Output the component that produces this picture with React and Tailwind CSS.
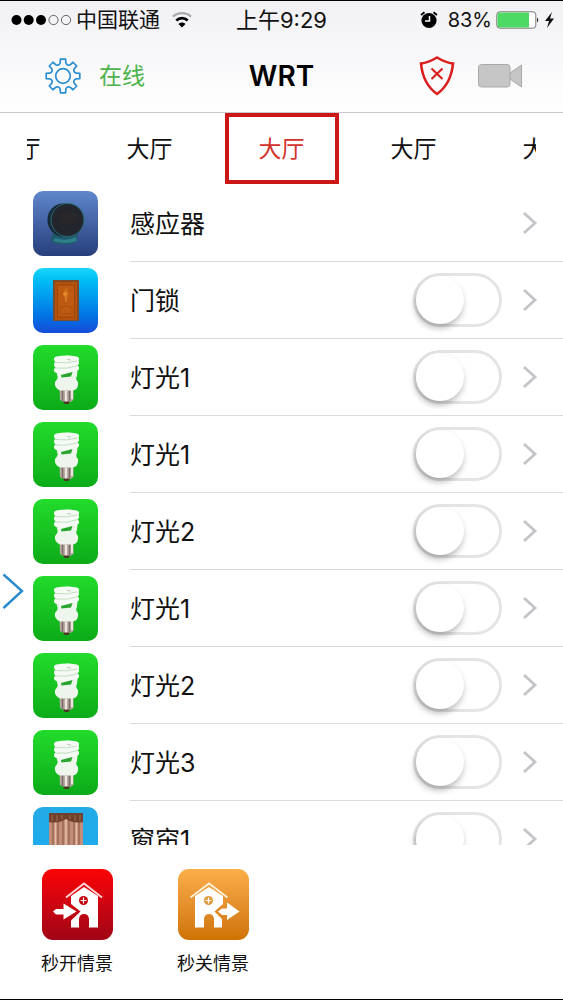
import React, { useState } from 'react';

const devices = [
    { id: 1, name: '感应器', type: 'sensor', hasSwitch: false },
    { id: 2, name: '门锁', type: 'door', hasSwitch: true },
    { id: 3, name: '灯光1', type: 'light', hasSwitch: true },
    { id: 4, name: '灯光1', type: 'light', hasSwitch: true },
    { id: 5, name: '灯光2', type: 'light', hasSwitch: true },
    { id: 6, name: '灯光1', type: 'light', hasSwitch: true },
    { id: 7, name: '灯光2', type: 'light', hasSwitch: true },
    { id: 8, name: '灯光3', type: 'light', hasSwitch: true },
    { id: 9, name: '窗帘1', type: 'curtain', hasSwitch: true },
];

const rooms = ['大厅', '大厅', '大厅', '大厅', '大厅'];

// Outline of an eight-toothed gear around 0,0
function gearPath() {
    const point = (deg, r) => {
        const rad = (deg * Math.PI) / 180;
        return `${(r * Math.sin(rad)).toFixed(2)} ${(-r * Math.cos(rad)).toFixed(2)}`;
    };
    let d = `M${point(-9, 17)}`;
    for (let a = 0; a < 360; a += 45) {
        d += `L${point(a + 9, 17)}L${point(a + 12, 13.5)}`;
        d += `Q${point(a + 22.5, 10.5)} ${point(a + 33, 13.5)}L${point(a + 36, 17)}`;
    }
    return d + 'Z';
}

function GearIcon() {
    return (
        <svg className="size-9" viewBox="-18 -18 36 36" fill="none" stroke="#2a8fd0" strokeWidth="1.7" strokeLinejoin="round" aria-hidden="true">
            <path d={gearPath()} />
            <circle r="7.3" />
        </svg>
    );
}

function ShieldIcon() {
    return (
        <svg className="h-10 w-9" viewBox="0 0 36 40" fill="none" stroke="#d9201f" aria-hidden="true">
            <path d="M18 1.5C13 4.5 7.5 7 2 7.5C3.2 20 7.5 30.5 18 38C28.5 30.5 32.8 20 34 7.5C28.5 7 23 4.5 18 1.5Z" strokeWidth="2.6" />
            <path d="M12.5 12.5L23.500 23M23.500 12.5L12.5 23" strokeWidth="2.2" />
        </svg>
    );
}

function CameraIcon() {
    return (
        <svg className="h-6 w-[45px]" viewBox="0 0 45 24" fill="#c6c6c6" stroke="#a9a9a9" aria-hidden="true">
            <path d="M32 9L43.5 1V23L32 15Z" />
            <rect x="0.5" y="0.5" width="31.5" height="22.5" rx="3" />
        </svg>
    );
}

function StatusBar() {
    return (
        <div className="grid h-[38px] grid-cols-[1fr_auto_1fr] items-center text-[21px]">
            <div className="flex items-center pl-[11px]">
                <svg className="h-3 w-[61px]" viewBox="0 0 61 12" aria-hidden="true">
                    <circle cx="5.5" cy="6" r="5" />
                    <circle cx="17.7" cy="6" r="5" />
                    <circle cx="30" cy="6" r="5" />
                    <circle cx="42.5" cy="6" r="4.6" fill="none" stroke="#555" strokeWidth="0.9" />
                    <circle cx="55" cy="6" r="4.6" fill="none" stroke="#555" strokeWidth="0.9" />
                </svg>
                <span className="ml-1">中国联通</span>
                <svg className="ml-3 h-4 w-5" viewBox="0 0 20 16" fill="none" aria-hidden="true">
                    <path d="M1 4.6C6 0 14 0 19 4.6" stroke="#aaa" strokeWidth="2.2" />
                    <path d="M4.3 8.4C7.5 5.4 12.5 5.4 15.7 8.4" stroke="#000" strokeWidth="2.8" />
                    <path d="M6.5 12C8.5 10 11.5 10 13.5 12L10 15.5Z" fill="#000" />
                </svg>
            </div>
            <span className="text-[22px]">上午9:29</span>
            <div className="flex items-center justify-end pr-2">
                <svg className="h-[18px] w-[18px]" viewBox="0 0 18 18" fill="none" aria-hidden="true">
                    <circle cx="9" cy="9.5" r="7.6" fill="#000" />
                    <path d="M1 4L4.5 1.2M17 4L13.5 1.2" stroke="#000" strokeWidth="1.8" />
                    <path d="M9.5 5V10H5" stroke="#fff" strokeWidth="1.5" />
                </svg>
                <span className="ml-[10px] text-xl">83%</span>
                <svg className="ml-1 h-[18px] w-11" viewBox="0 0 44 18" aria-hidden="true">
                    <rect x="0.8" y="0.8" width="39" height="16.4" rx="3" fill="#fff" stroke="#777" />
                    <path d="M4 1.5H33V16.5H4Q1.5 16.5 1.5 14V4Q1.5 1.5 4 1.5Z" fill="#4cd964" />
                    <path d="M41 6.5Q43.5 9 41 11.5Z" fill="#222" />
                </svg>
                <svg className="ml-1 h-[18px] w-[11px]" viewBox="0 0 11 18" aria-hidden="true">
                    <path d="M8 1L1 10H5L3 17L10 7.5H6Z" fill="#111" />
                </svg>
            </div>
        </div>
    );
}

function Header() {
    return (
        <header className="shrink-0 border-t border-b border-t-black border-b-[#c9c8cb] bg-linear-to-b from-[#f1f0f4] to-white">
            <StatusBar />
            <div className="grid h-[73px] grid-cols-[1fr_auto_1fr] items-center">
                <div className="flex items-center gap-[18px] pl-[45px]">
                    <button type="button" aria-label="设置">
                        <GearIcon />
                    </button>
                    <span className="pt-[2px] text-[23px] text-[#4cb34c]">在线</span>
                </div>
                <h1 className="text-[28px] font-semibold text-black">WRT</h1>
                <div className="flex items-center justify-end gap-[23px] pr-[40px]">
                    <button type="button" aria-label="布防">
                        <ShieldIcon />
                    </button>
                    <button type="button" aria-label="摄像头">
                        <CameraIcon />
                    </button>
                </div>
            </div>
        </header>
    );
}

function RoomTabs() {
    const [active, setActive] = useState(2);

    return (
        <nav className="shrink-0 px-[27px]">
            <div className="flex justify-center overflow-hidden">
                {rooms.map((room, i) => (
                    <div key={i} className="flex w-[132px] shrink-0 justify-center">
                        <button
                            type="button"
                            className={
                                i === active
                                    ? 'h-[71px] w-[114px] border-4 border-[#cc1717] pt-[2px] text-[23px] text-[#d3322b]'
                                    : 'h-[71px] w-[114px] pt-[2px] text-[23px]'
                            }
                            onClick={() => setActive(i)}
                        >
                            {room}
                        </button>
                    </div>
                ))}
            </div>
        </nav>
    );
}

function SensorArt() {
    return (
        <svg viewBox="0 0 65 65" aria-hidden="true">
            <path d="M19 43L18 51Q31 56 44 51L45 43Z" fill="#1f5a6b" />
            <path d="M22 47Q32 51 43 46L44 50Q32 54 20 50Z" fill="#2f7f8b" />
            <ellipse cx="30" cy="29" rx="15.5" ry="16.5" fill="#172a35" />
            <circle cx="34.5" cy="29" r="16.5" fill="#22252b" stroke="#286d79" strokeWidth="1" />
            <rect x="27" y="21" width="17" height="11" rx="3" fill="#2a272b" />
        </svg>
    );
}

function DoorArt() {
    return (
        <svg viewBox="0 0 65 65" aria-hidden="true">
            <rect x="20" y="12" width="26" height="41" fill="#7d4a2a" />
            <rect x="22" y="14" width="22" height="38" fill="#b5500f" />
            <rect x="24.5" y="17" width="17" height="32" fill="#bd5911" stroke="#934309" strokeWidth="0.8" />
            <path d="M33 19L36 25L33 34L30 25Z" fill="#cc6d1c" />
            <path d="M27 40Q33 36 39 40V46H27Z" fill="none" stroke="#a34b10" strokeWidth="0.8" />
            <circle cx="32" cy="26" r="1.8" fill="#e8922f" />
            <path d="M33 27V34" stroke="#dd8b2c" />
        </svg>
    );
}

function BulbArt() {
    return (
        <svg viewBox="0 0 65 65" aria-hidden="true">
            <path d="M26.5 43H40.5V55Q34 60 27 55Z" fill="#b9aaa4" />
            <path d="M29.5 45V56M36.5 45V56" stroke="#7c6c66" strokeWidth="1.6" />
            <path d="M33 46V57M39 45V54" stroke="#f3ece8" strokeWidth="1.8" />
            <path d="M30 56.500H37L35.500 59H31.500Z" fill="#4a3826" />
            <path d="M23 22L45 20L44 31Q42 34 45 37Q46 44 40 45.500H27Q21 43 22 37Q26 33 24 30Z" fill="#eef5ec" />
            <path d="M24 14.500Q34 12.500 43 14.500M24 19.500Q35 20.500 43 17.500M24 25Q35 26.500 43 23" fill="none" stroke="#f6faf5" strokeWidth="6" strokeLinecap="round" />
            <path d="M32 12Q35 9 38 12" fill="#f6faf5" />
            <path d="M22 17.500Q34 19 44 16M22 23Q34 24.500 45 20.500" fill="none" stroke="#bcd9bb" strokeWidth="0.9" />
            <path d="M28 30L39.5 27L38 31.500L28.500 32.500Z" fill="#27a52c" />
            <path d="M34 14.500L38 15" stroke="#b9c9b9" strokeWidth="1.2" />
        </svg>
    );
}

function CurtainArt() {
    return (
        <svg viewBox="0 0 65 65" aria-hidden="true">
            <rect x="16" y="6" width="34" height="52" fill="#c38e79" />
            <path d="M20 13V58M25 13V58M30 13V58M36 13V58M41 13V58M46 13V58" stroke="#9a6550" strokeWidth="1.4" />
            <path d="M22.5 15V58M33 10V58M43.5 15V58" stroke="#e4bca7" strokeWidth="1.5" />
            <path d="M16 6H50V15Q41 17 33 12Q25 17 16 15Z" fill="#70402d" />
            <path d="M19 8V14M24 8V14M29 8V12M37 8V12M42 8V14M47 8V14" stroke="#a16a4e" />
        </svg>
    );
}

const tiles = {
    sensor: { bg: 'from-[#6087cc] to-[#283f7c]', Art: SensorArt },
    door: { bg: 'from-[#17d6fb] to-[#164bd9]', Art: DoorArt },
    light: { bg: 'from-[#22dc2b] to-[#0cab18]', Art: BulbArt },
    curtain: { bg: 'from-[#23abe6] to-[#1aaaf0]', Art: CurtainArt },
};

function DeviceRow({ device }) {
    const [on, setOn] = useState(false);
    const { bg, Art } = tiles[device.type];
    const inputId = `device-${device.id}`;

    return (
        <li className="flex h-[77px] items-center pl-[33px]">
            <div className={`size-[65px] shrink-0 overflow-hidden rounded-[10px] bg-linear-to-b ${bg}`}>
                <Art />
            </div>
            <div className="ml-8 flex h-full flex-1 items-center border-b border-[#dad9dc] pr-[25px]">
                {device.hasSwitch ? (
                    <label htmlFor={inputId} className="flex-1 pt-1 text-[25px]">{device.name}</label>
                ) : (
                    <span className="flex-1 pt-1 text-[25px]">{device.name}</span>
                )}
                {device.hasSwitch && (
                    <input
                        id={inputId}
                        type="checkbox"
                        role="switch"
                        checked={on}
                        onChange={() => setOn(!on)}
                        className="h-[54px] w-[89px] appearance-none rounded-full border-3 border-[#e6e3e7] bg-white before:block before:size-12 before:rounded-full before:bg-white before:shadow-[-1px_4px_6px_rgba(0,0,0,0.28)] checked:bg-[#4cd964] checked:before:ml-[35px]"
                    />
                )}
                <button type="button" className="ml-5" aria-label="详情">
                    <svg className="h-6 w-4" viewBox="0 0 16 24" fill="none" stroke="#c5c3c8" strokeWidth="2.8" aria-hidden="true">
                        <path d="M2 2L13 12L2 22" />
                    </svg>
                </button>
            </div>
        </li>
    );
}

function ArriveIcon() {
    return (
        <svg viewBox="0 0 71 71" aria-hidden="true">
            <path d="M24 28.5L42 14.5L60 28.5" fill="none" stroke="#ffd9d9" strokeWidth="1.8" />
            <path d="M29 27L42 18L56 27V58.500H47V50Q46.500 45 42 45Q37.500 45 37 50V58.500H29V51.500L38.500 42.500L29 35Z" fill="#fff" />
            <path d="M11 42.5L14 40H21.500V34.500L34.500 42.500L21.500 50.500V45.500H14Z" fill="#fff" />
            <circle cx="41.5" cy="31.500" r="4.500" fill="#c4040f" />
            <path d="M41.5 28.500V34.500M38.500 31.500H44.500" stroke="#fff" strokeWidth="1.2" />
        </svg>
    );
}

function LeaveIcon() {
    return (
        <svg viewBox="0 0 71 71" aria-hidden="true">
            <path d="M12.5 28.5L31 14.5L49.5 28.5" fill="none" stroke="#fff0db" strokeWidth="1.8" />
            <path d="M17 27L31 18L45 27V35L36.500 42.500L44 50V58.500H36V50Q35.500 45 31 45Q26.500 45 26 50V58.500H17Z" fill="#fff" />
            <path d="M40 42.5L44 39.500H49V33.500L61.500 42.500L49 51V46H44Z" fill="#fff" />
            <circle cx="30.5" cy="31.500" r="4.500" fill="#e39a3b" />
            <path d="M30.5 28.500V34.500M27.500 31.500H33.500" stroke="#fff" strokeWidth="1.2" />
        </svg>
    );
}

function SceneBar() {
    return (
        <footer className="flex shrink-0 gap-16 border-b border-black px-[41px] pt-6 pb-[21px]">
            <button type="button" className="flex w-[72px] flex-col items-center gap-[10px]">
                <span className="size-[71px] rounded-[11px] bg-linear-to-b from-[#fb0303] to-[#a00515]">
                    <ArriveIcon />
                </span>
                <span className="text-lg/7 whitespace-nowrap">秒开情景</span>
            </button>
            <button type="button" className="flex w-[72px] flex-col items-center gap-[10px]">
                <span className="size-[71px] rounded-[11px] bg-linear-to-b from-[#fbae49] to-[#cf7300]">
                    <LeaveIcon />
                </span>
                <span className="text-lg/7 whitespace-nowrap">秒关情景</span>
            </button>
        </footer>
    );
}

export default function App() {
    return (
        <div className="relative flex h-screen flex-col bg-white font-[Inter,'Noto_Sans_CJK_SC',sans-serif] text-[#111]">
            <Header />
            <RoomTabs />
            <ul className="min-h-0 flex-1 overflow-hidden pt-px">
                {devices.map((device) => (
                    <DeviceRow key={device.id} device={device} />
                ))}
            </ul>
            <SceneBar />
            {/* drawer handle on the left edge */}
            <button type="button" className="absolute top-[573px] left-[2px]" aria-label="打开菜单">
                <svg className="h-9 w-[22px]" viewBox="0 0 22 36" fill="none" stroke="#2b8acb" strokeWidth="2.4" aria-hidden="true">
                    <path d="M1.5 1.5L20 18L1.5 35" />
                </svg>
            </button>
        </div>
    );
}
